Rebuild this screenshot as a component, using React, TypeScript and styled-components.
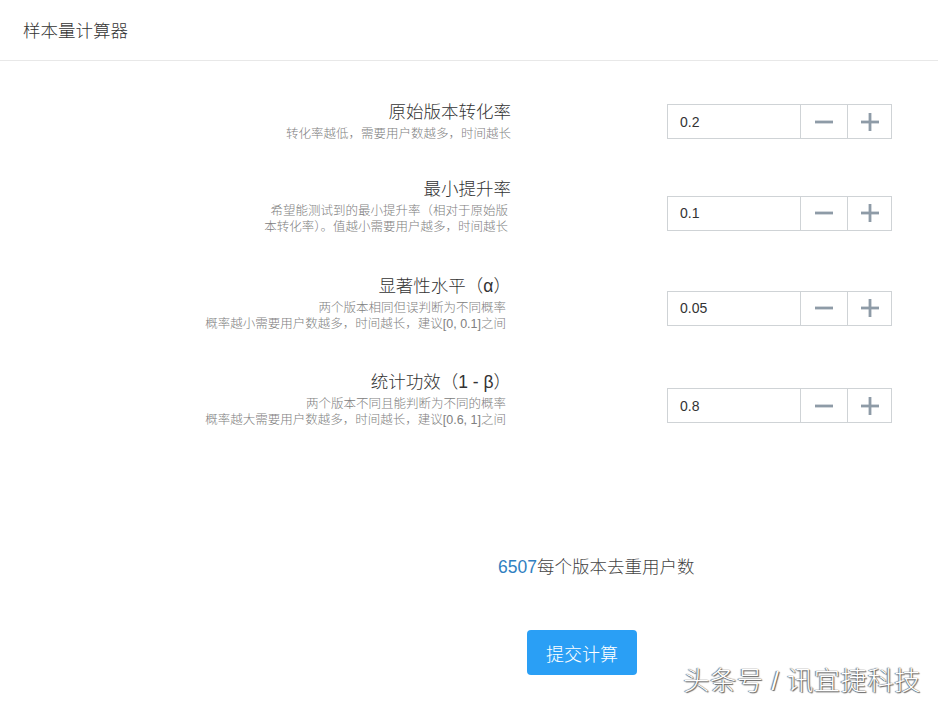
import React from "react";
import styled, { createGlobalStyle } from "styled-components";

const GlobalStyle = createGlobalStyle`
  html, body { margin: 0; padding: 0; background: #fff; }
  body {
    font-family: "Liberation Sans", Arial, "Noto Sans CJK SC", sans-serif;
    color: #333;
  }
  * { box-sizing: border-box; }
`;

const Page = styled.div`
  position: relative;
  width: 938px;
  height: 705px;
  overflow: hidden;
  background: #fff;
`;

const Header = styled.header`
  height: 61px;
  display: flex;
  align-items: center;
  padding-left: 23px;
  padding-bottom: 1px;
  border-bottom: 1px solid #e8e8e8;
  font-size: 17.5px;
  font-weight: 300;
  color: #333;
`;

const Form = styled.div`
  display: flex;
  flex-direction: column;
`;

const Row = styled.div<{ $space: number }>`
  display: flex;
  align-items: center;
  margin-top: ${(p) => p.$space}px;
`;

const Label = styled.div`
  width: 511px;
  text-align: right;
  flex-shrink: 0;
`;

const Title = styled.div`
  font-size: 17.5px;
  line-height: 22px;
  font-weight: 300;
  color: #333;
`;

const DescBlock = styled.div<{ $pr: number }>`
  margin-top: 3px;
  padding-right: ${(p) => p.$pr}px;
`;

const Desc = styled.div`
  font-size: 12.5px;
  line-height: 16px;
  font-weight: 300;
  color: #808080;
`;

const Stepper = styled.div<{ $offset: number }>`
  margin-left: 156px;
  margin-top: ${(p) => p.$offset}px;
  width: 225px;
  height: 35px;
  display: flex;
  border: 1px solid #cfd3d6;
`;

const Value = styled.div`
  flex: 1;
  display: flex;
  align-items: center;
  padding-left: 12px;
  font-size: 14px;
  color: #333;
`;

const StepButton = styled.div<{ $w: number }>`
  width: ${(p) => p.$w}px;
  display: flex;
  align-items: center;
  justify-content: center;
  border-left: 1px solid #cfd3d6;
  background: #fff;
`;

const Footer = styled.div`
  display: flex;
  flex-direction: column;
  padding-top: 127px;
`;

const Result = styled.div`
  margin-left: 498px;
  font-size: 17.5px;
  line-height: 24px;
  font-weight: 300;
  color: #444;
`;

const Num = styled.span`
  color: #2f7fc1;
`;

const Submit = styled.button`
  margin-left: 527px;
  margin-top: 51px;
  width: 110px;
  height: 45px;
  border: none;
  border-radius: 4px;
  background: #2a9ff5;
  color: #fff;
  font-family: inherit;
  font-size: 18px;
  font-weight: 300;
  cursor: pointer;
`;

const Watermark = styled.div`
  position: absolute;
  right: 17px;
  bottom: 7px;
  font-size: 26.3px;
  font-weight: 300;
  color: #fff;
  letter-spacing: 0.5px;
  text-shadow: 0 0 1px #444, 1px 1px 1px #666, -1px 0 1px #888;
`;

const Minus = () => (
  <svg width="20" height="20" viewBox="0 0 20 20">
    <line x1="1" y1="10" x2="19" y2="10" stroke="#8e9ba7" strokeWidth="2.8" />
  </svg>
);

const Plus = () => (
  <svg width="20" height="20" viewBox="0 0 20 20">
    <line x1="1" y1="10" x2="19" y2="10" stroke="#8e9ba7" strokeWidth="2.8" />
    <line x1="10" y1="1" x2="10" y2="19" stroke="#8e9ba7" strokeWidth="2.8" />
  </svg>
);

type Field = {
  title: string;
  desc: string[];
  value: string;
  pr: number;
  offset: number;
  space: number;
};

const fields: Field[] = [
  {
    title: "原始版本转化率",
    desc: ["转化率越低，需要用户数越多，时间越长"],
    value: "0.2",
    pr: 0,
    offset: 0,
    space: 40,
  },
  {
    title: "最小提升率",
    desc: ["希望能测试到的最小提升率（相对于原始版", "本转化率）。值越小需要用户越多，时间越长"],
    value: "0.1",
    pr: 3,
    offset: 13,
    space: 36,
  },
  {
    title: "显著性水平（α）",
    desc: ["两个版本相同但误判断为不同概率", "概率越小需要用户数越多，时间越长，建议[0, 0.1]之间"],
    value: "0.05",
    pr: 5,
    offset: 9,
    space: 40,
  },
  {
    title: "统计功效（1 - β）",
    desc: ["两个版本不同且能判断为不同的概率", "概率越大需要用户数越多，时间越长，建议[0.6, 1]之间"],
    value: "0.8",
    pr: 5,
    offset: 12,
    space: 39,
  },
];

export default function App() {
  return (
    <Page>
      <GlobalStyle />
      <Header>样本量计算器</Header>
      <Form>
        {fields.map((f) => (
          <Row key={f.title} $space={f.space}>
            <Label>
              <Title>{f.title}</Title>
              <DescBlock $pr={f.pr}>
                {f.desc.map((d) => (
                  <Desc key={d}>{d}</Desc>
                ))}
              </DescBlock>
            </Label>
            <Stepper $offset={f.offset}>
              <Value>{f.value}</Value>
              <StepButton $w={47}>
                <Minus />
              </StepButton>
              <StepButton $w={44}>
                <Plus />
              </StepButton>
            </Stepper>
          </Row>
        ))}
      </Form>
      <Footer>
        <Result>
          <Num>6507</Num>每个版本去重用户数
        </Result>
        <Submit>提交计算</Submit>
      </Footer>
      <Watermark>头条号 / 讯宜捷科技</Watermark>
    </Page>
  );
}
